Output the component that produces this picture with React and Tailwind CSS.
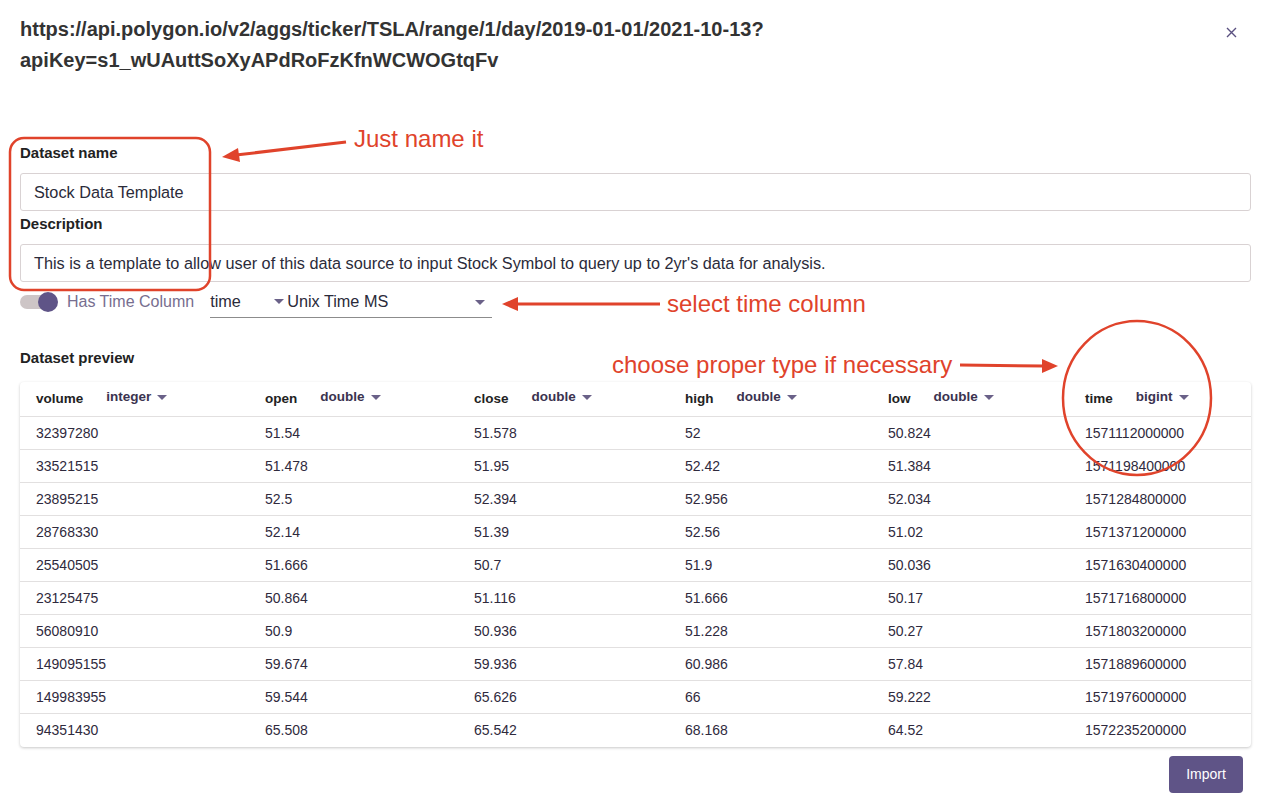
import React from "react";

const rows = [
  ["32397280", "51.54", "51.578", "52", "50.824", "1571112000000"],
  ["33521515", "51.478", "51.95", "52.42", "51.384", "1571198400000"],
  ["23895215", "52.5", "52.394", "52.956", "52.034", "1571284800000"],
  ["28768330", "52.14", "51.39", "52.56", "51.02", "1571371200000"],
  ["25540505", "51.666", "50.7", "51.9", "50.036", "1571630400000"],
  ["23125475", "50.864", "51.116", "51.666", "50.17", "1571716800000"],
  ["56080910", "50.9", "50.936", "51.228", "50.27", "1571803200000"],
  ["149095155", "59.674", "59.936", "60.986", "57.84", "1571889600000"],
  ["149983955", "59.544", "65.626", "66", "59.222", "1571976000000"],
  ["94351430", "65.508", "65.542", "68.168", "64.52", "1572235200000"],
];

// column name, type, width in px
const cols = [
  ["volume", "integer", 229],
  ["open", "double", 209],
  ["close", "double", 211],
  ["high", "double", 203],
  ["low", "double", 197],
  ["time", "bigint", 182],
];

const Caret = () => (
  <svg width="10" height="6" viewBox="0 0 10 6" className="inline-block">
    <path d="M0 0 L10 0 L5 5 Z" fill="#6a6188" />
  </svg>
);

function Annotations() {
  const red = "#e0432b";
  return (
    <>
      <svg
        className="absolute inset-0 pointer-events-none"
        width="1271"
        height="801"
        viewBox="0 0 1271 801"
      >
        {/* box round name/description */}
        <rect x="10" y="138" width="200" height="152" rx="14" fill="none" stroke={red} strokeWidth="2.5" />
        {/* just name it arrow */}
        <line x1="346" y1="142" x2="236" y2="155" stroke={red} strokeWidth="3" />
        <path d="M222 157 L238 148 L240 162 Z" fill={red} />
        {/* select time column arrow */}
        <line x1="660" y1="304" x2="516" y2="304" stroke={red} strokeWidth="3" />
        <path d="M502 304 L518 297 L518 311 Z" fill={red} />
        {/* choose proper type arrow */}
        <line x1="960" y1="365" x2="1044" y2="366" stroke={red} strokeWidth="3" />
        <path d="M1058 366 L1042 359 L1042 373 Z" fill={red} />
        {/* circle round time column */}
        <ellipse cx="1137" cy="398" rx="74" ry="77" fill="none" stroke={red} strokeWidth="2.5" />
      </svg>
      <div className="absolute left-[354px] top-[124px] text-[24px] leading-[30px] text-[#e0432b]">Just name it</div>
      <div className="absolute left-[667px] top-[289px] text-[24px] leading-[30px] text-[#e0432b]">select time column</div>
      <div className="absolute left-[612px] top-[350px] text-[24px] leading-[30px] text-[#e0432b]">choose proper type if necessary</div>
    </>
  );
}

export default function App() {
  return (
    <div
      className="relative w-[1271px] h-[801px] bg-white overflow-hidden text-[#222]"
      style={{ fontFamily: '"Liberation Sans", Arial, sans-serif' }}
    >
      <div className="px-5">
        {/* header */}
        <div className="flex justify-between pt-[14px]">
          <div className="text-[20px] leading-[31px] font-semibold text-[#333]">
            https://api.polygon.io/v2/aggs/ticker/TSLA/range/1/day/2019-01-01/2021-10-13?
            <br />
            apiKey=s1_wUAuttSoXyAPdRoFzKfnWCWOGtqFv
          </div>
          <button className="mt-[13px] mr-[15px] h-[10px] w-[10px]">
            <svg width="11" height="11" viewBox="0 0 11 11">
              <path d="M1 1 L10 10 M10 1 L1 10" stroke="#5a5080" strokeWidth="1.4" />
            </svg>
          </button>
        </div>

        {/* form */}
        <div className="mt-[67px] text-[15px] leading-[20px] font-bold text-[#222]">Dataset name</div>
        <div className="mt-[10px] h-[38px] border border-[#d9d2d3] rounded-[3px] flex items-center px-[13px] text-[16.25px] text-[#2b2b3a]">
          Stock Data Template
        </div>
        <div className="mt-[3px] text-[15px] leading-[20px] font-bold text-[#222]">Description</div>
        <div className="mt-[10px] h-[38px] border border-[#d9d2d3] rounded-[3px] flex items-center px-[13px] text-[16.25px] text-[#2b2b3a]">
          This is a template to allow user of this data source to input Stock Symbol to query up to 2yr's data for analysis.
        </div>

        {/* time column */}
        <div className="mt-[4px] h-[32px] flex items-center">
          <div className="relative w-[38px] h-[20px] flex items-center">
            <div className="w-[34px] h-[14px] rounded-full bg-[#cdc5c6]" />
            <div className="absolute left-[18px] top-0 w-[20px] h-[20px] rounded-full bg-[#5f5487]" />
          </div>
          <span className="ml-[9px] text-[16px] text-[#776e8f]">Has Time Column</span>
          <div className="ml-[16px] w-[282px] h-[32px] border-b border-[#8c8c8c] flex items-center text-[16.25px] text-[#2b2b3a]">
            <span className="w-[64px]">time</span>
            <Caret />
            <span className="ml-[3px] flex-1">Unix Time MS</span>
            <span className="mr-[7px]"><Caret /></span>
          </div>
        </div>

        <div className="mt-[30px] text-[15px] leading-[20px] font-bold text-[#222]">Dataset preview</div>

        {/* table */}
        <div className="mt-[14px] rounded-[4px] shadow-[0_1px_3px_rgba(0,0,0,0.22)] bg-white">
          <div className="flex h-[35px] pb-[3px] border-b border-[#e2e0e0]">
            {cols.map(([name, type, w]) => (
              <div key={name} style={{ width: w }} className="pl-[16px] flex items-center shrink-0">
                <span className="text-[13.5px] font-bold text-[#222] translate-y-[2px]">{name}</span>
                <span className="ml-[23px] text-[13.5px] font-bold text-[#3b3350] flex items-center gap-[6px]">
                  {type}
                  <Caret />
                </span>
              </div>
            ))}
          </div>
          {rows.map((r, i) => (
            <div
              key={i}
              className={"flex h-[33px] " + (i < rows.length - 1 ? "border-b border-[#e2e0e0]" : "")}
            >
              {r.map((v, j) => (
                <div
                  key={j}
                  style={{ width: cols[j][2] }}
                  className="pl-[16px] flex items-center shrink-0 text-[14px] text-[#2f2a3d]"
                >
                  {v}
                </div>
              ))}
            </div>
          ))}
        </div>

        <div className="flex justify-end mt-[9px] pr-[8px]">
          <button className="h-[37px] w-[74px] rounded-[4px] bg-[#5f5487] text-white text-[14px]">
            Import
          </button>
        </div>
      </div>

      <Annotations />
    </div>
  );
}
